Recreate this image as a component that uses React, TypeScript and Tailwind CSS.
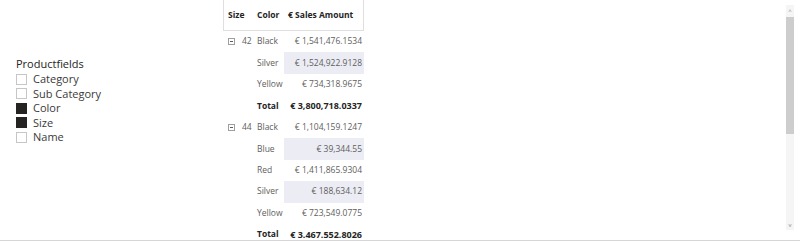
import { useState } from 'react';

const fields = [
    { name: 'Category', checked: false },
    { name: 'Sub Category', checked: false },
    { name: 'Color', checked: true },
    { name: 'Size', checked: true },
    { name: 'Name', checked: false },
];

type Row = { size?: string; color: string; amount: string; total?: boolean; hl?: boolean };

const rows: Row[] = [
    { size: '42', color: 'Black', amount: '€ 1,541,476.1534' },
    { color: 'Silver', amount: '€ 1,524,922.9128', hl: true },
    { color: 'Yellow', amount: '€ 734,318.9675' },
    { color: 'Total', amount: '€ 3,800,718.0337', total: true },
    { size: '44', color: 'Black', amount: '€ 1,104,159.1247' },
    { color: 'Blue', amount: '€ 39,344.55', hl: true },
    { color: 'Red', amount: '€ 1,411,865.9304' },
    { color: 'Silver', amount: '€ 188,634.12', hl: true },
    { color: 'Yellow', amount: '€ 723,549.0775' },
    { color: 'Total', amount: '€ 3.467.552.8026', total: true },
];

export default function App() {
    const [checked, setChecked] = useState(fields.map((f) => f.checked));

    return (
        <div
            className="w-[800px] h-[241px] bg-white overflow-hidden flex border-b border-[#d6d6d6]"
            style={{ fontFamily: '"Open Sans", "Noto Sans", sans-serif' }}
        >
            {/* slicer */}
            <div className="w-[223px] pl-[16px] pt-[56px] text-[11px] text-[#252423]">
                <div className="h-[16px] leading-[16px]">Productfields</div>
                {fields.map((f, i) => (
                    <label key={f.name} className="flex items-center gap-[6px] h-[14.5px] leading-[14px] cursor-pointer">
                        <span
                            onClick={() => setChecked(checked.map((c, j) => (j === i ? !c : c)))}
                            className={
                                'w-[11px] h-[11px] border ' +
                                (checked[i] ? 'bg-[#252423] border-[#252423]' : 'bg-white border-[#c8c6c4]')
                            }
                        />
                        <span className="text-[#3b3a39]">{f.name}</span>
                    </label>
                ))}
            </div>

            {/* matrix */}
            <div className="w-[141px] text-[8.5px]">
                <div className="h-[31px] flex items-center border border-t-0 border-[#e1dfdd] font-bold text-[#252423]">
                    <span className="w-[33px] pl-[4px]">Size</span>
                    <span className="w-[31px]">Color</span>
                    <span className="flex-1">€ Sales Amount</span>
                </div>
                {rows.map((r, i) => (
                    <div key={i} className="h-[21.45px] flex items-center text-[#605e5c]">
                        <div className="w-[34px] flex items-center pl-[5px]">
                            {r.size && (
                                <>
                                    <span className="w-[7px] h-[7px] border border-[#a19f9d] flex items-center justify-center">
                                        <span className="w-[3px] h-px bg-[#605e5c]" />
                                    </span>
                                    <span className="ml-[7px]">{r.size}</span>
                                </>
                            )}
                        </div>
                        <div className={'w-[27px] ' + (r.total ? 'font-bold text-[#252423]' : '')}>{r.color}</div>
                        <div
                            className={
                                'flex-1 h-full flex items-center justify-end pr-[2px] ' +
                                (r.hl ? 'bg-[#ececf4] ' : '') +
                                (r.total ? 'font-bold text-[#252423] text-[9px]' : '')
                            }
                        >
                            {r.amount}
                        </div>
                    </div>
                ))}
            </div>

            <div className="flex-1" />

            {/* scrollbar */}
            <div className="w-[8px] mr-[6px] mt-[5px] h-[225px] bg-[#f5f5f5] flex flex-col items-center">
                <span className="h-[12px] text-[6px] leading-[12px] text-[#8a8a8a]">^</span>
                <div className="w-full h-[117px] bg-[#cdcdcd]" />
                <div className="flex-1" />
                <span className="h-[10px] text-[6px] leading-[10px] text-[#8a8a8a]">v</span>
            </div>
        </div>
    );
}
